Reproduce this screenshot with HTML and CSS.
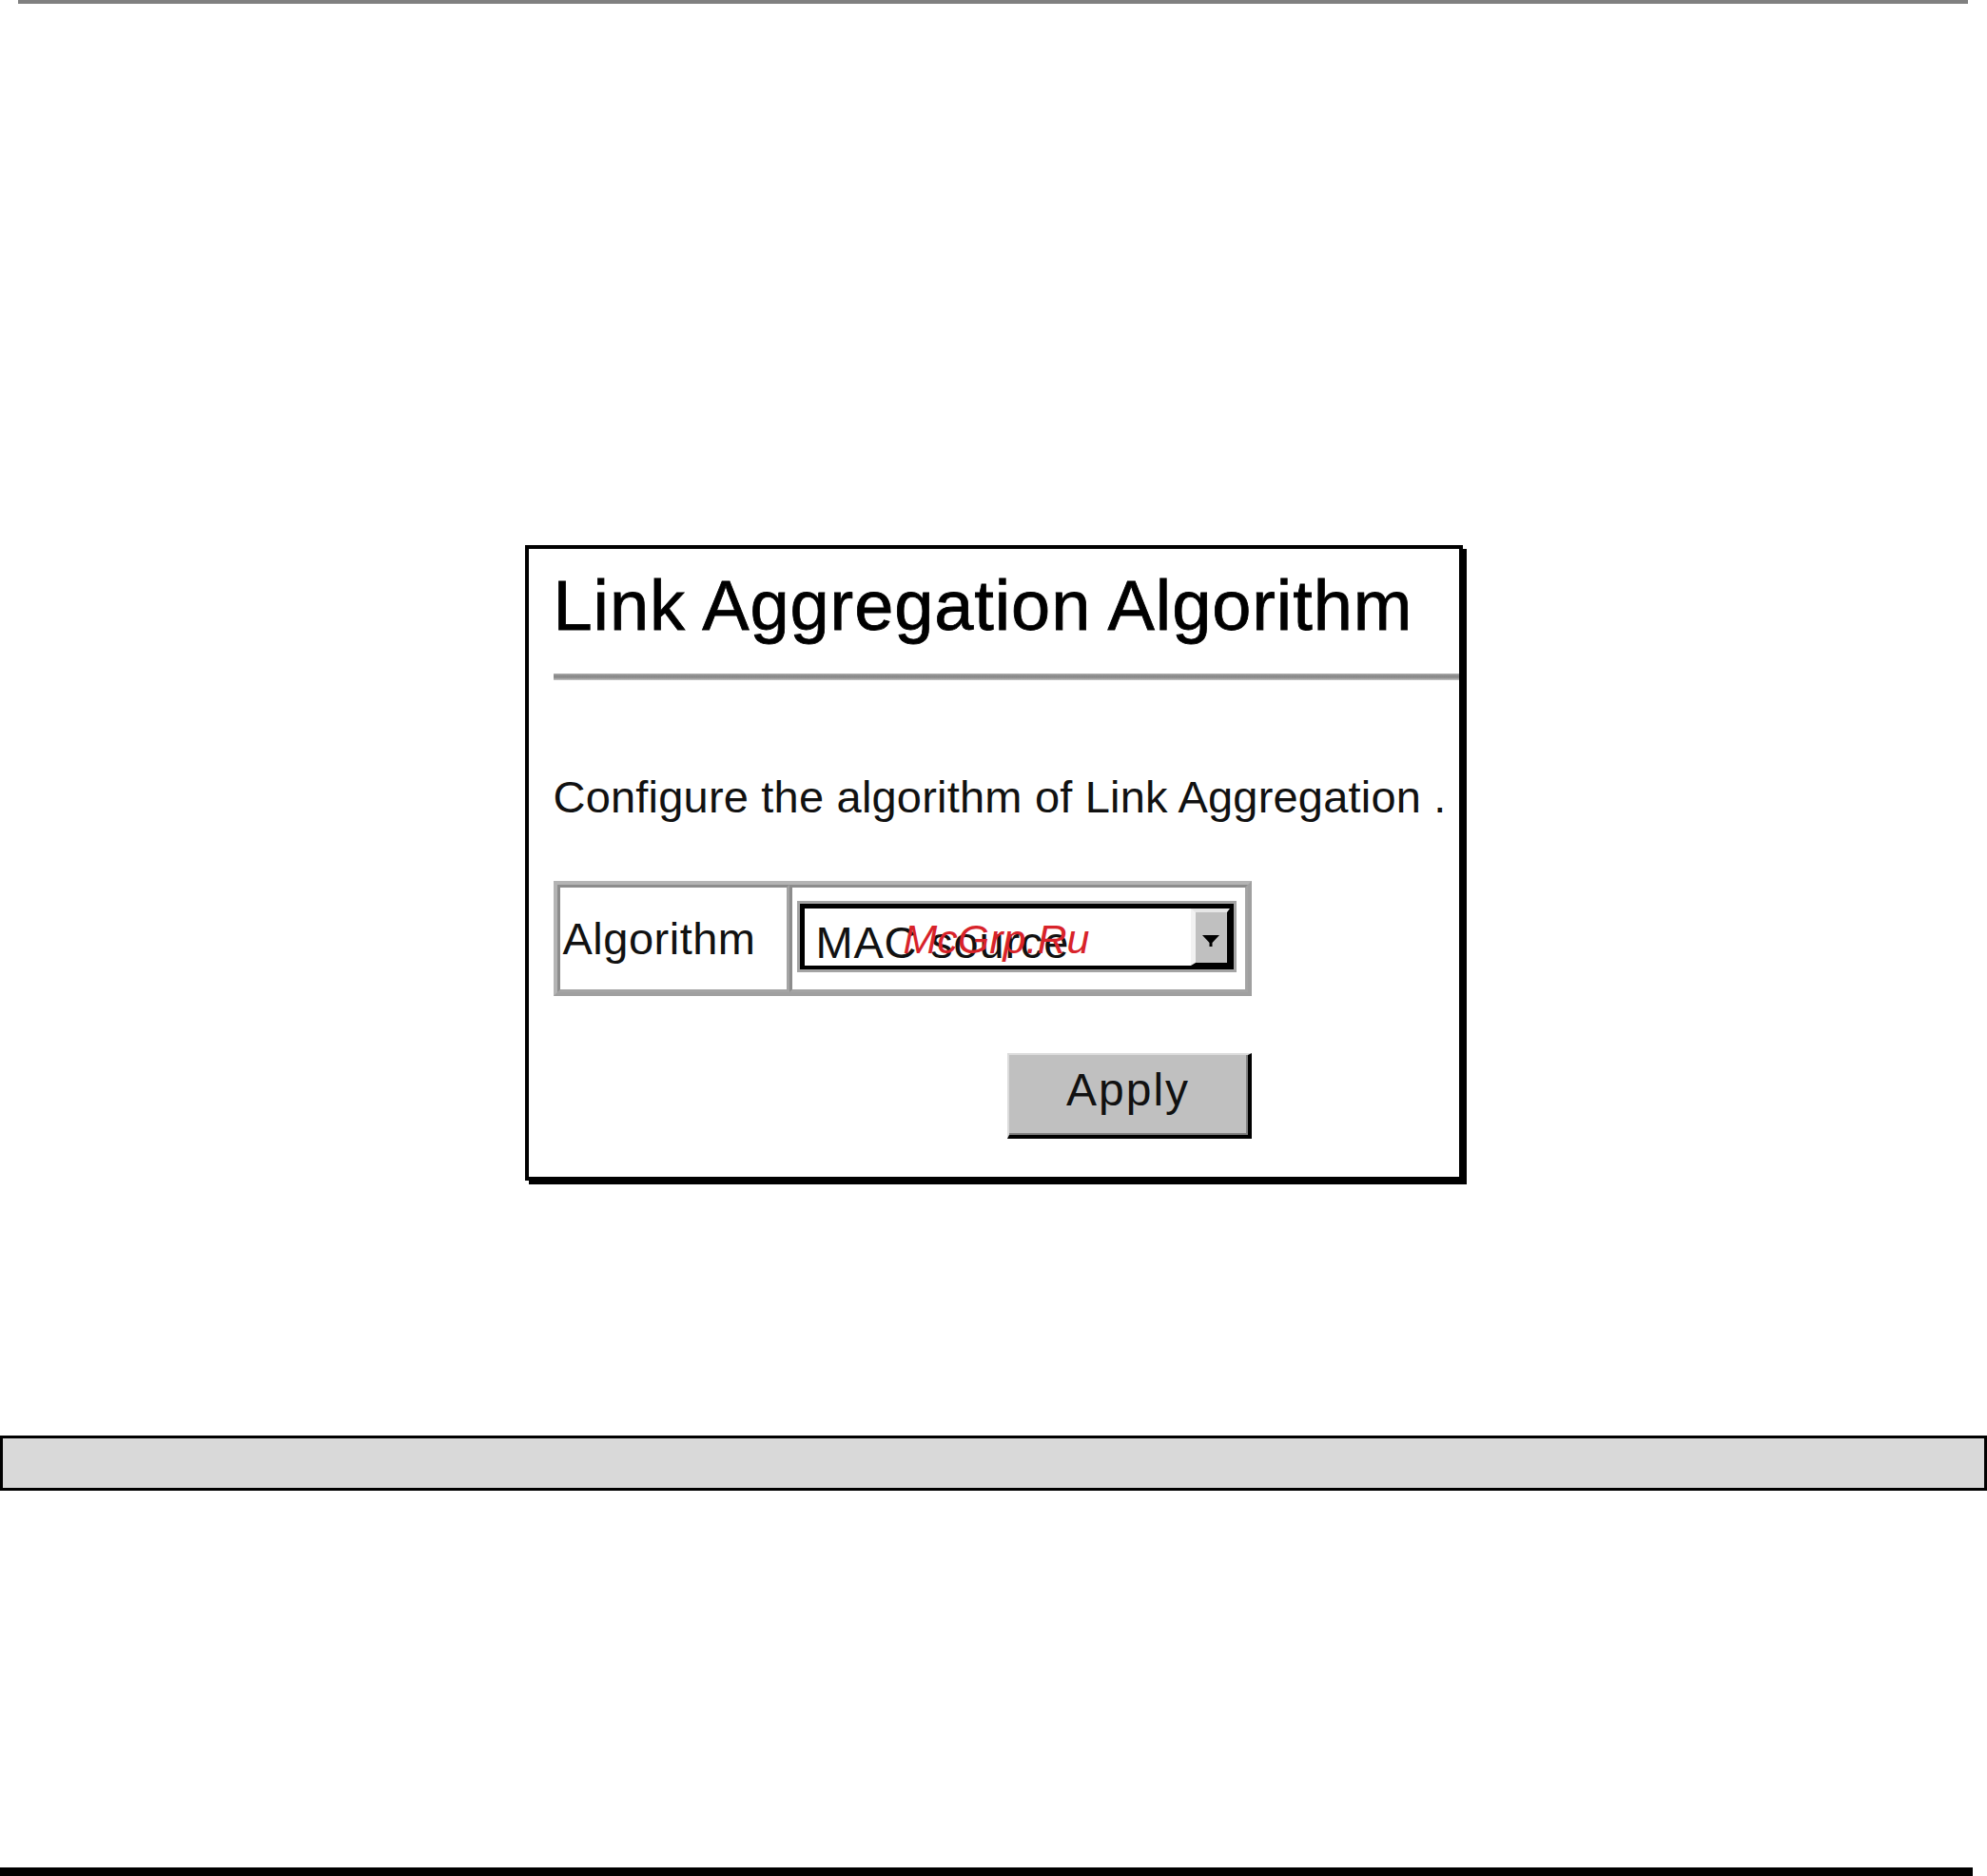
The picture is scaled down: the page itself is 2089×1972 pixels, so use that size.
FILE: index.html
```html
<!DOCTYPE html>
<html lang="en">
<head>
    <title>Link Aggregation Algorithm</title>
    <link rel="stylesheet" href="styles.css">
</head>
<body>
    <div class="top-rule"></div>

    <div class="panel">
        <h1 class="panel-title">Link Aggregation Algorithm</h1>
        <div class="title-rule"></div>

        <p class="intro">Configure the algorithm of Link Aggregation .</p>

        <form class="form-area">
            <table class="algo-table">
                <tr>
                    <td class="label-cell">Algorithm</td>
                    <td class="field-cell">
                        <div class="select-box">
                            <div class="select-inner">
                                <span class="select-value">MAC source</span>
                                <span class="select-arrow">
                                    <svg width="20" height="14" viewBox="0 0 20 14">
                                        <polygon points="1,1 19,1 11.5,9 11.5,13 8.5,13 8.5,9" fill="#000"/>
                                    </svg>
                                </span>
                            </div>
                        </div>
                        <span class="stamp">McGrp.Ru</span>
                    </td>
                </tr>
            </table>

            <button type="submit" class="btn-apply">Apply</button>
        </form>
    </div>

    <div class="status-bar"></div>

    <div class="bottom-rule"></div>
</body>
</html>
```

FILE: styles.css
```css
body {
    margin: 0;
    background-color: #fff;
    font-family: "Liberation Sans", Arial, Helvetica, sans-serif;
    color: #000;
}

.top-rule {
    height: 4px;
    margin: 0 20px 0 19px;
    background-color: #808080;
}

/* Main dialog box */
.panel {
    box-sizing: border-box;
    width: 986px;
    margin: 569px auto 0;
    padding: 23px 0 40px 26px;
    border: 4px solid #000;
    box-shadow: 4px 4px 0 #000;
    background-color: #fff;
}

.panel-title {
    margin: 0;
    font-size: 74px;
    font-weight: normal;
    line-height: 74px;
    letter-spacing: 0.9px;
    white-space: nowrap;
    -webkit-text-stroke: 0.8px #000;
}

.title-rule {
    height: 7px;
    margin-top: 34px;
    background: linear-gradient(#b0b0b0, #888 35%, #909090 65%, #c8c8c8);
}

.intro {
    margin: 99px 0 0;
    font-size: 47px;
    line-height: 47px;
    letter-spacing: 0.2px;
    color: #111;
    white-space: nowrap;
}

.form-area {
    display: inline-flex;
    flex-direction: column;
    align-items: flex-end;
    margin-top: 65px;
}

.algo-table {
    border-collapse: separate;
    border-spacing: 0;
    border: 4px solid #a0a0a0;
    border-top-color: #b4b4b4;
    border-left-color: #b4b4b4;
}

.algo-table td {
    border: 3px solid #a4a4a4;
    border-top-color: #8c8c8c;
    border-left-color: #8c8c8c;
    vertical-align: middle;
}

.label-cell {
    width: 203px;
    padding: 0 32px 0 3px;
    font-size: 47px;
    line-height: 47px;
    letter-spacing: 0.5px;
    color: #111;
}

.field-cell {
    position: relative;
    padding: 14px 9px 18px 5px;
}

/* Drop-down list */
.select-box {
    box-sizing: border-box;
    width: 462px;
    height: 75px;
    border: 3px solid #a4a4a4;
}

.select-inner {
    display: flex;
    height: 100%;
    box-sizing: border-box;
    border-style: solid;
    border-color: #000;
    border-width: 5px 4px 4px 5px;
    background-color: #fff;
}

.select-value {
    flex: 1;
    padding: 12px 0 0 12px;
    font-size: 47px;
    line-height: 47px;
    letter-spacing: 0.8px;
    color: #111;
    white-space: nowrap;
}

.select-arrow {
    display: flex;
    align-items: center;
    justify-content: center;
    box-sizing: border-box;
    width: 41px;
    background-color: #c0c0c0;
    border-style: solid;
    border-width: 4px 3px 3px 5px;
    border-color: #e6e6e6 #000 #000 #f2f2f2;
}

.select-arrow svg {
    display: block;
    margin-top: 6px;
}

.stamp {
    position: absolute;
    left: 117px;
    top: 33px;
    font-size: 43px;
    font-style: italic;
    line-height: 43px;
    color: #d8232a;
    white-space: nowrap;
}

.btn-apply {
    box-sizing: border-box;
    width: 257px;
    height: 90px;
    margin-top: 60px;
    padding: 13px 0 23px;
    font-family: "Liberation Sans", Arial, Helvetica, sans-serif;
    font-size: 48px;
    line-height: 48px;
    letter-spacing: 2px;
    color: #111;
    background-color: #c0c0c0;
    border-style: solid;
    border-width: 2px 4px 4px 2px;
    border-color: #dcdcdc #000 #000 #dcdcdc;
    box-shadow: inset -2px -2px 0 #808080;
    cursor: pointer;
}

.status-bar {
    box-sizing: border-box;
    height: 58px;
    margin-top: 268px;
    border: 3px solid #000;
    background-color: #d9d9d9;
}

.bottom-rule {
    height: 9px;
    margin: 396px 15px 0 0;
    background-color: #000;
}
```
